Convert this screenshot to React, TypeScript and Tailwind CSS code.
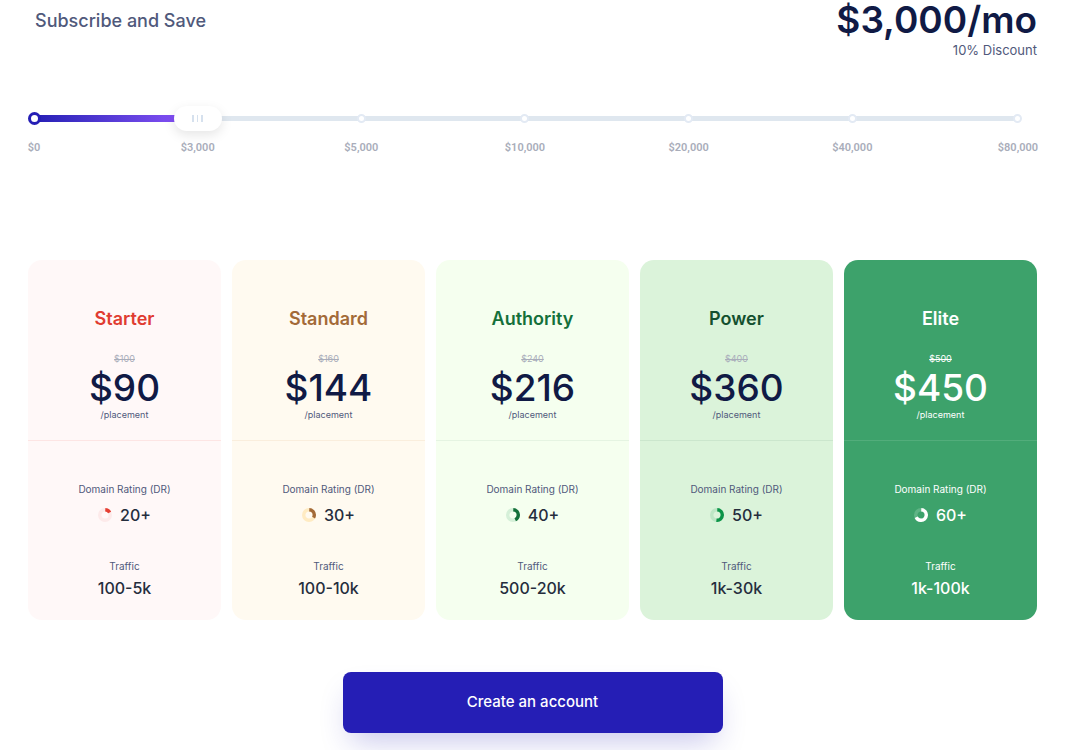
import { useState } from "react";

type Plan = {
    name: string;
    oldPrice: string;
    price: string;
    rating: number;
    share: number;
    traffic: string;
    card: string;
    title: string;
    line: string;
    ring: string;
    arc: string;
    dark?: boolean;
}

const steps = ["$0", "$3,000", "$5,000", "$10,000", "$20,000", "$40,000", "$80,000"];

const plans: Plan[] = [
    { name: "Starter", oldPrice: "$100", price: "$90", rating: 20, share: 16, traffic: "100-5k", card: "bg-[#fff8f8]", title: "text-[#e03c31]", line: "border-[#fde5e4]", ring: "#fdeaea", arc: "#e53e32" },
    { name: "Standard", oldPrice: "$160", price: "$144", rating: 30, share: 33, traffic: "100-10k", card: "bg-[#fffaf0]", title: "text-[#a36a38]", line: "border-[#faeedd]", ring: "#ffebc2", arc: "#a36a38" },
    { name: "Authority", oldPrice: "$240", price: "$216", rating: 40, share: 42, traffic: "500-20k", card: "bg-[#f5ffef]", title: "text-[#14703a]", line: "border-[#e5f4e2]", ring: "#d5f0d8", arc: "#14703a" },
    { name: "Power", oldPrice: "$400", price: "$360", rating: 50, share: 51, traffic: "1k-30k", card: "bg-[#dbf3da]", title: "text-[#14502f]", line: "border-[#cbe6cd]", ring: "#bde6c5", arc: "#0c9448" },
    { name: "Elite", oldPrice: "$500", price: "$450", rating: 60, share: 67, traffic: "1k-100k", card: "bg-[#3da26b]", title: "text-white", line: "border-[#52ad7b]", ring: "#5fb485", arc: "#ffffff", dark: true },
];

function Donut({ value, ring, arc }: { value: number; ring: string; arc: string }) {
    return (
        <svg width="14" height="14" viewBox="0 0 14 14" fill="none" aria-hidden="true">
            <circle cx="7" cy="7" r="5.3" stroke={ring} strokeWidth="3.4" />
            <circle
                cx="7"
                cy="7"
                r="5.3"
                stroke={arc}
                strokeWidth="3.4"
                pathLength={100}
                strokeDasharray={`${value} 100`}
                transform="rotate(-87 7 7)"
            />
        </svg>
    )
}

function PlanCard({ plan }: { plan: Plan }) {
    const muted = plan.dark ? "text-white" : "text-[#50597b]";
    return (
        <article className={`overflow-hidden rounded-[14px] text-center ${plan.card}`}>
            <div className={`border-b pt-[45px] pb-[18px] ${plan.line}`}>
                <h2 className={`text-lg leading-7 font-semibold ${plan.title}`}>{plan.name}</h2>
                <p className={`mt-[18px] text-[9px] leading-4 ${plan.dark ? "text-white" : "text-[#a9adba]"}`}>
                    <s>{plan.oldPrice}</s>
                </p>
                <p className={`text-[37px] leading-[41px] font-medium ${plan.dark ? "text-white" : "text-[#101a45]"}`}>{plan.price}</p>
                <p className={`text-[9px] leading-[14px] ${muted}`}>/placement</p>
            </div>
            <div className="pt-10 pb-5">
                <p className={`text-[10px] leading-4 ${muted}`}>Domain Rating (DR)</p>
                <div className={`mt-1.5 flex items-center justify-center gap-2 text-base leading-6 font-medium ${plan.dark ? "text-white" : "text-[#252d3d]"}`}>
                    <Donut value={plan.share} ring={plan.ring} arc={plan.arc} />
                    <span>{plan.rating}+</span>
                </div>
                <p className={`mt-[31px] text-[10px] leading-4 ${muted}`}>Traffic</p>
                <p className={`mt-0.5 text-base leading-6 font-medium ${plan.dark ? "text-white" : "text-[#252d3d]"}`}>{plan.traffic}</p>
            </div>
        </article>
    )
}

function BudgetSlider({ value, onChange }: { value: number; onChange: (value: number) => void }) {
    return (
        <div className="mt-[46px]">
            <div className="relative h-[25px] pr-[19px] pl-1.5">
                <div className="flex h-full items-center">
                    <div className="h-[5px] w-full bg-[#dfe7ef]">
                        <div
                            className="-mt-px h-[7px] bg-linear-to-r from-[#251eb5] to-[#8450f5] to-90%"
                            style={{ width: `${(value / (steps.length - 1)) * 100}%` }}
                        ></div>
                    </div>
                </div>
                <div className="absolute inset-y-0 right-[17px] left-1.5 flex items-center justify-between">
                    {steps.map((step, index) => (
                        <div key={step} className="flex w-0 justify-center last:w-1">
                            <span
                                className={index < value
                                    ? "size-[13px] shrink-0 rounded-full border-[3px] border-[#251eb5] bg-white"
                                    : "size-[9px] shrink-0 rounded-full border-2 border-[#e3eaf4] bg-white"}
                            ></span>
                        </div>
                    ))}
                </div>
                <input
                    type="range"
                    aria-label="Monthly budget"
                    min={0}
                    max={steps.length - 1}
                    value={value}
                    onChange={(e) => onChange(Number(e.target.value))}
                    className="absolute inset-y-0 -left-[18px] h-full w-[calc(100%+21px)] cursor-pointer appearance-none bg-transparent outline-none [&::-webkit-slider-thumb]:h-[25px] [&::-webkit-slider-thumb]:w-12 [&::-webkit-slider-thumb]:appearance-none [&::-webkit-slider-thumb]:rounded-full [&::-webkit-slider-thumb]:bg-white [&::-webkit-slider-thumb]:bg-[linear-gradient(90deg,#d6e1ee_0_2px,transparent_2px_5px,#d6e1ee_5px_6px,transparent_6px_9px,#d6e1ee_9px_11px)] [&::-webkit-slider-thumb]:bg-size-[11px_7px] [&::-webkit-slider-thumb]:bg-center [&::-webkit-slider-thumb]:bg-no-repeat [&::-webkit-slider-thumb]:shadow-[0_4px_12px_rgba(0,0,0,0.10)]"
                />
            </div>
            <div className="mt-[9px] flex justify-between pr-[17px] pl-1.5 font-['Roboto',sans-serif] text-[11px] leading-4 font-semibold text-[#a9adba]">
                {steps.map((step) => (
                    <div key={step} className="flex w-0 justify-center last:w-1">
                        <span>{step}</span>
                    </div>
                ))}
            </div>
        </div>
    )
}

function App() {
    const [step, setStep] = useState(1);
    return (
        <main className="bg-white pr-[33px] pb-[17px] pl-7 font-['Inter',sans-serif]">
            <header className="flex items-start justify-between">
                <h1 className="mt-[7px] ml-[7px] text-lg leading-7 font-medium text-[#50597b]">Subscribe and Save</h1>
                <div className="text-right">
                    <p className="text-[37px] leading-[39px] font-semibold text-[#101a45]">{steps[step]}/mo</p>
                    <p className="mt-px text-[13px] leading-5 text-[#50597b]">10% Discount</p>
                </div>
            </header>

            <BudgetSlider value={step} onChange={setStep} />

            <section className="mt-[104px] grid grid-cols-5 gap-[11px]">
                {plans.map((plan) => (
                    <PlanCard key={plan.name} plan={plan} />
                ))}
            </section>

            <button
                type="button"
                className="mx-auto mt-[52px] block h-[61px] w-[380px] rounded-lg bg-[#251eb5] text-[15px] font-medium text-white shadow-[0_16px_30px_-8px_rgba(37,30,181,0.25)]"
            >
                Create an account
            </button>
        </main>
    )
}

export default App
